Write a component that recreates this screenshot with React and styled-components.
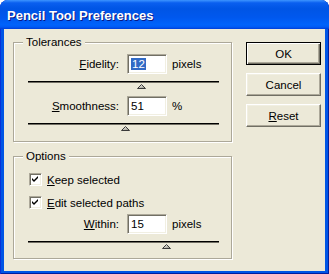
import React from 'react'
import styled, { createGlobalStyle } from 'styled-components'

const GlobalStyle = createGlobalStyle`
  html, body {
    margin: 0;
    padding: 0;
    background: #fff;
  }
  body {
    font-family: 'Liberation Sans', Arial, sans-serif;
    font-size: 11.5px;
    color: #000;
  }
`

const TRACK_WIDTH = 191

const Key = ({ children }) => <u>{children}</u>

const Thumb = () => (
  <svg width="9" height="5" viewBox="0 0 9 5">
    <defs>
      <linearGradient id="thumbFill" x1="0" y1="0" x2="1" y2="1">
        <stop offset="0" stopColor="#ffffff" />
        <stop offset="1" stopColor="#8a8878" />
      </linearGradient>
    </defs>
    <polygon points="0.5,4.5 4.5,0.5 8.5,4.5" fill="url(#thumbFill)" stroke="#3a3a3a" strokeWidth="1" />
  </svg>
)

const Check = () => (
  <svg width="7" height="7" viewBox="0 0 7 7">
    <path d="M0 2 L2 4 L6 0 L6 2 L2 6 L0 4 Z" fill="#000" />
  </svg>
)

const Slider = ({ value, min, max }) => (
  <SliderBox>
    <Track />
    <ThumbSpot style={{ left: Math.round(((value - min) / (max - min)) * TRACK_WIDTH) - 4 }}>
      <Thumb />
    </ThumbSpot>
  </SliderBox>
)

const App = () => (
  <>
    <GlobalStyle />
    <Window>
      <TitleBar>Pencil Tool Preferences</TitleBar>
      <Client>
        <Column>
          <Group height={100}>
            <Legend>Tolerances</Legend>
            <Row>
              <Label><Key>F</Key>idelity:</Label>
              <Field><Selected>12</Selected></Field>
              <Unit>pixels</Unit>
            </Row>
            <Slider value={12} min={0.5} max={20} />
            <Row top={7}>
              <Label><Key>S</Key>moothness:</Label>
              <Field>51</Field>
              <Unit>%</Unit>
            </Row>
            <Slider value={51} min={0} max={100} />
          </Group>
          <Group height={103} spaced pad={16}>
            <Legend>Options</Legend>
            <CheckRow>
              <Box><Check /></Box>
              <CheckLabel><Key>K</Key>eep selected</CheckLabel>
            </CheckRow>
            <CheckRow top={10}>
              <Box><Check /></Box>
              <CheckLabel><Key>E</Key>dit selected paths</CheckLabel>
            </CheckRow>
            <Row top={5}>
              <Label><Key>W</Key>ithin:</Label>
              <Field>15</Field>
              <Unit>pixels</Unit>
            </Row>
            <Slider value={15} min={2} max={20} />
          </Group>
        </Column>
        <Buttons>
          <Button primary>OK</Button>
          <Button>Cancel</Button>
          <Button><Key>R</Key>eset</Button>
        </Buttons>
      </Client>
    </Window>
  </>
)

export default App

const Window = styled.div`
  width: 329px;
  height: 274px;
  display: flex;
  flex-direction: column;
  background: #0055e5;
  border-radius: 8px 8px 0 0;
  overflow: hidden;
  box-shadow: inset 1px 0 0 #0831d9, inset -1px 0 0 #001ea0, inset 0 -1px 0 #001ea0;
`

const TitleBar = styled.div`
  height: 29px;
  flex: none;
  display: flex;
  align-items: center;
  padding: 1px 0 0 7px;
  box-sizing: border-box;
  color: #fff;
  font-size: 13px;
  font-weight: bold;
  text-shadow: 1px 1px 0 #0a1883;
  background: linear-gradient(
    to bottom,
    #3d95ff 0%,
    #0a5fef 10%,
    #0055e5 30%,
    #0058ee 60%,
    #0063fb 85%,
    #005bf5 93%,
    #003dd7 100%
  );
`

const Client = styled.div`
  flex: 1;
  margin: 0 4px 3px 4px;
  background: #ece9d8;
  display: flex;
  align-items: flex-start;
  padding: 13px 4px 0 9px;
`

const Column = styled.div`
  width: 219px;
  display: flex;
  flex-direction: column;
`

const Group = styled.div`
  position: relative;
  box-sizing: border-box;
  height: ${(p) => p.height}px;
  margin-top: ${(p) => (p.spaced ? 14 : 0)}px;
  padding-top: ${(p) => p.pad || 11}px;
  border: 1px solid #aca899;
  box-shadow: inset 1px 1px 0 #fff, 1px 1px 0 #fff;
`

const Legend = styled.div`
  position: absolute;
  top: -7px;
  left: 9px;
  padding: 0 3px;
  line-height: 13px;
  background: #ece9d8;
`

const Row = styled.div`
  display: flex;
  align-items: center;
  height: 20px;
  margin-top: ${(p) => p.top || 0}px;
`

const Label = styled.div`
  width: 105px;
  margin-right: 8px;
  text-align: right;
`

const Field = styled.div`
  width: 40px;
  height: 20px;
  box-sizing: border-box;
  padding: 2px 0 0 3px;
  line-height: 14px;
  background: #fff;
  border: 1px solid;
  border-color: #aca899 #fff #fff #aca899;
  box-shadow: inset 1px 1px 0 #716f64, inset -1px -1px 0 #f1efe2;
`

const Selected = styled.span`
  background: #316ac5;
  color: #fff;
  padding: 0 1px;
`

const Unit = styled.div`
  margin-left: 5px;
`

const SliderBox = styled.div`
  position: relative;
  width: ${TRACK_WIDTH}px;
  height: 8px;
  margin: 7px 0 0 14px;
`

const Track = styled.div`
  height: 1px;
  background: #000;
  border-bottom: 1px solid #716f64;
`

const ThumbSpot = styled.div`
  position: absolute;
  top: 3px;
  width: 9px;
  height: 5px;
  line-height: 0;
`

const CheckRow = styled.div`
  display: flex;
  align-items: center;
  height: 13px;
  padding-left: 15px;
  margin-top: ${(p) => p.top || 0}px;
`

const Box = styled.div`
  width: 13px;
  height: 13px;
  box-sizing: border-box;
  display: flex;
  align-items: center;
  justify-content: center;
  background: #fff;
  border: 1px solid;
  border-color: #aca899 #fff #fff #aca899;
  box-shadow: inset 1px 1px 0 #716f64, inset -1px -1px 0 #f1efe2;
`

const CheckLabel = styled.div`
  margin-left: 5px;
`

const Buttons = styled.div`
  width: 75px;
  margin-left: 14px;
  display: flex;
  flex-direction: column;
  gap: 8px;
`

const Button = styled.button`
  width: 75px;
  height: 23px;
  padding: 0;
  font-family: inherit;
  font-size: 11.5px;
  color: #000;
  background: #ece9d8;
  border: 1px solid;
  border-color: #fff #716f64 #716f64 #fff;
  box-shadow: inset -1px -1px 0 #aca899, inset 1px 1px 0 #f1efe2;

  ${(p) =>
    p.primary &&
    `
      border-color: #000;
      box-shadow: inset 1px 1px 0 #fff, inset -1px -1px 0 #716f64, inset -2px -2px 0 #aca899;
    `}
`
